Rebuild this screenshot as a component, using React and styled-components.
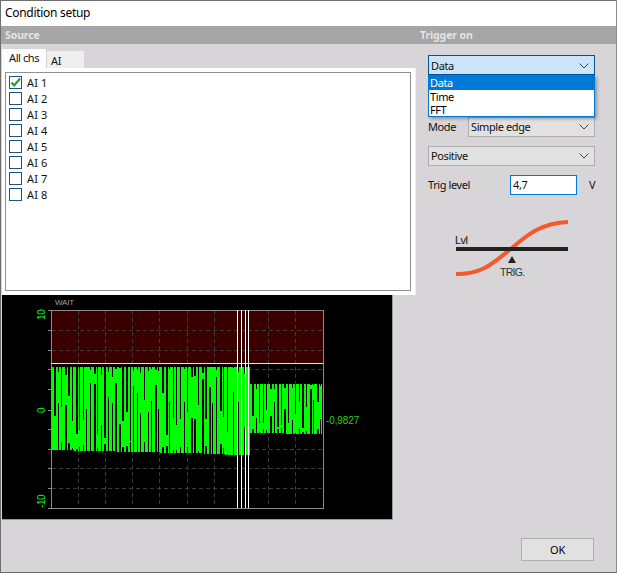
import React from "react";
import styled, { createGlobalStyle } from "styled-components";

const Global = createGlobalStyle`
  html, body { margin: 0; padding: 0; background: #d7d5d8; }
  * { box-sizing: border-box; }
`;

const FONT = `"Noto Sans", "Open Sans", "Liberation Sans", sans-serif`;

const Window = styled.div`
  width: 617px;
  height: 573px;
  display: flex;
  flex-direction: column;
  background: #d7d5d8;
  border: 1px solid #6e6e6e;
  border-right-color: #8a8a8a;
  font-family: ${FONT};
  font-size: 11px;
  letter-spacing: -0.4px;
  color: #111;
  overflow: hidden;
`;
const TitleBar = styled.div`
  height: 25px;
  flex: none;
  background: #fff;
  padding-left: 4px;
  line-height: 24px;
  font-size: 12px;
  letter-spacing: -0.3px;
  color: #000;
`;
const SectionBar = styled.div`
  height: 18px;
  flex: none;
  display: grid;
  grid-template-columns: 419px 1fr;
  background: #a6a6a6;
  color: #e4e4e4;
  font-size: 10.5px;
  letter-spacing: -0.1px;
  font-weight: 700;
  line-height: 18px;
`;
const SectionLabel = styled.div`
  padding-left: ${(p) => p.$inset}px;
`;
const Body = styled.div`
  flex: 1;
  display: grid;
  grid-template-columns: 426px 1fr;
  min-height: 0;
`;
const LeftColumn = styled.div`
  padding: 5px 0 0 1px;
  display: flex;
  flex-direction: column;
  align-items: flex-start;
`;
const Tabs = styled.div`
  display: flex;
  align-items: flex-end;
  height: 19px;
  gap: 1px;
`;
const Tab = styled.div`
  width: ${(p) => p.$w}px;
  height: ${(p) => (p.$active ? 19 : 17)}px;
  background: ${(p) => (p.$active ? "#fff" : "#efefef")};
  padding-left: ${(p) => (p.$active ? 7 : 4)}px;
  line-height: ${(p) => (p.$active ? 17 : 19)}px;
  white-space: nowrap;
`;
const TabPanel = styled.div`
  width: 414px;
  height: 227px;
  flex: none;
  background: #fff;
  padding: 4px 4px 4px 3px;
  border-right: 1px solid #f0f0f0;
`;
const ChannelList = styled.div`
  height: 100%;
  border: 1px solid #8f8f9a;
  padding: 1px 3px;
  display: flex;
  flex-direction: column;
`;
const ChannelRow = styled.label`
  height: 16px;
  display: flex;
  align-items: center;
  gap: 5px;
  letter-spacing: 0.1px;
`;
const CheckBox = styled.span`
  width: 13px;
  height: 13px;
  flex: none;
  border: 1px solid #1c5580;
  background: #fff;
  display: block;
  svg { display: block; }
`;
const ChartBox = styled.div`
  width: 391px;
  height: 225px;
  flex: none;
  background: #000;
  border-right: 1px solid #9a9a9a;
  border-bottom: 1px solid #9a9a9a;
  svg { display: block; }
`;
const RightColumn = styled.div`
  position: relative;
  padding: 11px 23px 0 1px;
  display: flex;
  flex-direction: column;
`;
const Select = styled.div`
  height: 20px;
  display: flex;
  align-items: center;
  justify-content: space-between;
  padding: 0 5px ${(p) => (p.$open ? 0 : 1)}px 2px;
  flex: ${(p) => (p.$grow ? 1 : "none")};
  background: ${(p) => (p.$open ? "#cce4f7" : "#e1e1e1")};
  border: 1px solid ${(p) => (p.$open ? "#005499" : "#adadad")};
`;
const Menu = styled.div`
  position: absolute;
  top: 31px;
  left: 1px;
  width: 167px;
  height: 42px;
  background: #fff;
  border: 1px solid #0078d7;
  box-shadow: 2px 2px 3px rgba(0, 0, 0, 0.3);
  z-index: 2;
`;
const MenuItem = styled.div`
  height: 13px;
  line-height: 13px;
  padding-left: 1px;
  background: ${(p) => (p.$selected ? "#0078d7" : "transparent")};
  color: ${(p) => (p.$selected ? "#fff" : "#000")};
  &:first-child { height: 14px; }
`;
const Row = styled.div`
  display: flex;
  align-items: center;
  margin-top: ${(p) => p.$top}px;
`;
const FieldLabel = styled.span`
  width: ${(p) => p.$w}px;
  flex: none;
  margin-bottom: 2px;
`;
const LevelInput = styled.div`
  width: 67px;
  height: 20px;
  background: #fff;
  border: 1px solid #0078d7;
  padding-left: 2px;
  line-height: 17px;
  flex: none;
`;
const Unit = styled.span`
  margin: 0 0 2px 12px;
`;
const Diagram = styled.svg`
  display: block;
  margin: 23px 0 0 25px;
`;
const Footer = styled.div`
  position: absolute;
  right: 24px;
  bottom: 11px;
`;
const OkButton = styled.button`
  width: 73px;
  height: 23px;
  padding: 0;
  background: #e1e1e1;
  border: 1px solid #adadad;
  font-family: ${FONT};
  font-size: 11px;
  color: #000;
`;

const ChevronIcon = styled.svg`
  flex: none;
  margin-top: 1px;
`;

const Chevron = () => (
  <ChevronIcon width="10" height="6" viewBox="0 0 10 6" fill="none" stroke="#444" strokeWidth="1">
    <path d="M0.5 0.5 L5 5 L9.5 0.5" />
  </ChevronIcon>
);

const Check = () => (
  <svg width="11" height="11" viewBox="0 0 11 11" fill="none" stroke="#1e9a2a" strokeWidth="2">
    <path d="M1.5 5.5 L4.2 8.5 L10 1.5" />
  </svg>
);

function makeWave() {
  let seed = 11;
  const rnd = () => {
    seed = (seed * 16807) % 2147483647;
    return seed / 2147483647;
  };
  const green = [];
  const black = [];
  const addSegment = (x0, x1, top, bottomA, bottomB, period, minDepth, maxDepth) => {
    green.push(`M${x0} ${top}H${x1}V${bottomB}L${x0} ${bottomA}Z`);
    for (let x = x0 + 2; x < x1 - 1; x += period) {
      const px = Math.round(x);
      const w = rnd() < 0.45 ? 2 : 1;
      const t = (x - x0) / (x1 - x0);
      const bot = Math.round(bottomA + (bottomB - bottomA) * t);
      const depth = Math.round(minDepth + rnd() * (maxDepth - minDepth));
      const span = bot - top;
      if (rnd() < 0.5) {
        black.push(`M${px} ${top - 1}h${w}V${top + depth}h-${w}Z`);
        black.push(`M${px} ${bot - Math.round(rnd() * span * 0.12)}h${w}V${bot + 2}h-${w}Z`);
      } else {
        black.push(`M${px} ${bot - depth}h${w}V${bot + 2}h-${w}Z`);
        black.push(`M${px} ${top - 1}h${w}V${top + Math.round(rnd() * span * 0.12)}h-${w}Z`);
      }
    }
  };
  addSegment(52, 225, 70, 153, 157, 3.6, 25, 78);
  addSegment(225, 250, 70, 158, 158, 5.5, 20, 65);
  addSegment(250, 322, 87, 136, 137, 3.6, 14, 46);
  return { green: green.join(""), black: black.join("") };
}

const wave = makeWave();

const gridX = [78.5, 105.5, 132.5, 159.5, 187.5, 214.5, 268.5, 295.5];
const gridY = [330.5, 350.5, 369.5, 389.5, 429.5, 449.5, 468.5, 488.5];
const OX = 2;
const OY = 295;

const ChartDrawing = () => (
  <svg width="390" height="224" viewBox={`${OX} ${OY} 390 224`} shapeRendering="crispEdges">
    <rect x="51" y="310" width="272" height="53" fill="#3a0000" />
    <g stroke="#3b3b3b" strokeDasharray="4 3" fill="none">
      {gridX.map((x) => (
        <path key={x} d={`M${x} 311V507`} />
      ))}
      {gridY.map((y) => (
        <path key={y} d={`M52 ${y}H322`} />
      ))}
    </g>
    <g transform="translate(0 297)">
      <path d={wave.green} fill="#00ff00" />
      <path d={wave.black} fill="#000" />
    </g>
    <path d="M51.5 310V508.5M51 310.5H323.5V508.5M51 508.5H323.5" stroke="#8c8c8c" fill="none" />
    <g stroke="#8c8c8c">
      {[310.5, 330.5, 350.5, 369.5, 389.5, 410.5, 429.5, 449.5, 468.5, 488.5, 508.5].map((y) => (
        <path key={y} d={`M48 ${y}H51`} />
      ))}
    </g>
    <path d="M51 363.5H323" stroke="#ffff00" />
    <g stroke="#fff">
      {[237.5, 241.5, 245.5, 248.5].map((x) => (
        <path key={x} d={`M${x} 310V508`} />
      ))}
    </g>
    <g fontFamily={`"Liberation Sans", sans-serif`} shapeRendering="auto">
      <text x="55" y="305" fontSize="8" letterSpacing="-0.2" fill="#a0a0a0">WAIT</text>
      <text transform="translate(45 320) rotate(-90)" fontSize="10" fill="#00ff00">10</text>
      <text transform="translate(45 413) rotate(-90)" fontSize="10" fill="#00ff00">0</text>
      <text transform="translate(45 508) rotate(-90)" fontSize="10" fill="#00ff00">-10</text>
      <text x="326" y="424" fontSize="10" letterSpacing="-0.1" fill="#1fd01f">-0,9827</text>
    </g>
  </svg>
);

const channels = ["AI 1", "AI 2", "AI 3", "AI 4", "AI 5", "AI 6", "AI 7", "AI 8"];

export default function App() {
  return (
    <Window>
      <Global />
      <TitleBar>Condition setup</TitleBar>
      <SectionBar>
        <SectionLabel $inset={4}>Source</SectionLabel>
        <SectionLabel $inset={0}>Trigger on</SectionLabel>
      </SectionBar>
      <Body>
        <LeftColumn>
          <Tabs>
            <Tab $active $w={44}>All chs</Tab>
            <Tab $w={37}>AI</Tab>
          </Tabs>
          <TabPanel>
            <ChannelList>
              {channels.map((c, i) => (
                <ChannelRow key={c}>
                  <CheckBox>{i === 0 && <Check />}</CheckBox>
                  {c}
                </ChannelRow>
              ))}
            </ChannelList>
          </TabPanel>
          <ChartBox>
            <ChartDrawing />
          </ChartBox>
        </LeftColumn>
        <RightColumn>
          <Select $open>
            Data
            <Chevron />
          </Select>
          <Menu>
            <MenuItem $selected>Data</MenuItem>
            <MenuItem>Time</MenuItem>
            <MenuItem>FFT</MenuItem>
          </Menu>
          <Row $top={42}>
            <FieldLabel $w={40}>Mode</FieldLabel>
            <Select $grow>
              Simple edge
              <Chevron />
            </Select>
          </Row>
          <Row $top={9}>
            <Select $grow>
              Positive
              <Chevron />
            </Select>
          </Row>
          <Row $top={9}>
            <FieldLabel $w={82}>Trig level</FieldLabel>
            <LevelInput>4,7</LevelInput>
            <Unit>V</Unit>
          </Row>
          <Diagram width="120" height="66" viewBox="0 0 120 66">
            <path d="M3 56 C30 56 40 45 59 30 C76 15 90 5 115 4" fill="none" stroke="#f4592c" strokeWidth="4" />
            <rect x="3" y="29" width="112" height="4" fill="#222" />
            <path d="M55 45 L63 45 L59 38 Z" fill="#222" />
            <text x="2" y="26" fontFamily={`"Liberation Sans", sans-serif`} fontSize="11" letterSpacing="-0.5" fill="#111">Lvl</text>
            <text x="47" y="58" fontFamily={`"Liberation Sans", sans-serif`} fontSize="10.5" letterSpacing="-0.7" fill="#333">TRIG.</text>
          </Diagram>
          <Footer>
            <OkButton>OK</OkButton>
          </Footer>
        </RightColumn>
      </Body>
    </Window>
  );
}
